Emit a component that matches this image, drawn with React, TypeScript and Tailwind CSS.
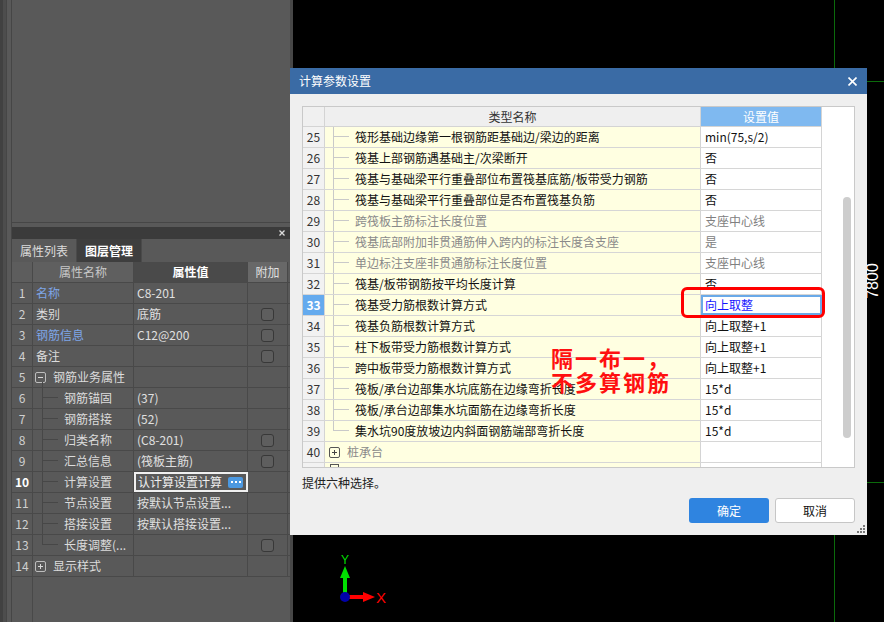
import React from 'react';

type PropRow = {
  n: number;
  name: string;
  value?: string;
  blue?: boolean;
  check?: boolean;
  tree?: 'open' | 'closed' | 'child' | 'lastChild';
  editing?: boolean;
};

const propRows: PropRow[] = [
  { n: 1, name: '名称', value: 'C8-201', blue: true },
  { n: 2, name: '类别', value: '底筋', check: true },
  { n: 3, name: '钢筋信息', value: 'C12@200', blue: true, check: true },
  { n: 4, name: '备注', check: true },
  { n: 5, name: '钢筋业务属性', tree: 'open' },
  { n: 6, name: '钢筋锚固', value: '(37)', tree: 'child' },
  { n: 7, name: '钢筋搭接', value: '(52)', tree: 'child' },
  { n: 8, name: '归类名称', value: '(C8-201)', tree: 'child', check: true },
  { n: 9, name: '汇总信息', value: '(筏板主筋)', tree: 'child', check: true },
  { n: 10, name: '计算设置', value: '认计算设置计算', tree: 'child', editing: true },
  { n: 11, name: '节点设置', value: '按默认节点设置...', tree: 'child' },
  { n: 12, name: '搭接设置', value: '按默认搭接设置...', tree: 'child' },
  { n: 13, name: '长度调整(...', tree: 'lastChild', check: true },
  { n: 14, name: '显示样式', tree: 'closed' },
];

type CalcRow = { n: number; name: string; value: string; muted?: boolean; selected?: boolean; last?: boolean };

const calcRows: CalcRow[] = [
  { n: 25, name: '筏形基础边缘第一根钢筋距基础边/梁边的距离', value: 'min(75,s/2)' },
  { n: 26, name: '筏基上部钢筋遇基础主/次梁断开', value: '否' },
  { n: 27, name: '筏基与基础梁平行重叠部位布置筏基底筋/板带受力钢筋', value: '否' },
  { n: 28, name: '筏基与基础梁平行重叠部位是否布置筏基负筋', value: '否' },
  { n: 29, name: '跨筏板主筋标注长度位置', value: '支座中心线', muted: true },
  { n: 30, name: '筏基底部附加非贯通筋伸入跨内的标注长度含支座', value: '是', muted: true },
  { n: 31, name: '单边标注支座非贯通筋标注长度位置', value: '支座中心线', muted: true },
  { n: 32, name: '筏基/板带钢筋按平均长度计算', value: '否' },
  { n: 33, name: '筏基受力筋根数计算方式', value: '向上取整', selected: true },
  { n: 34, name: '筏基负筋根数计算方式', value: '向上取整+1' },
  { n: 35, name: '柱下板带受力筋根数计算方式', value: '向上取整+1' },
  { n: 36, name: '跨中板带受力筋根数计算方式', value: '向上取整+1' },
  { n: 37, name: '筏板/承台边部集水坑底筋在边缘弯折长度', value: '15*d' },
  { n: 38, name: '筏板/承台边部集水坑面筋在边缘弯折长度', value: '15*d' },
  { n: 39, name: '集水坑90度放坡边内斜面钢筋端部弯折长度', value: '15*d', last: true },
];

function ExpandBox({ open, dark }: { open: boolean; dark?: boolean }) {
  const line = dark ? 'bg-[#d8d8d8]' : 'bg-[#444444]';
  return (
    <span
      className={`relative flex h-[11px] w-[11px] shrink-0 items-center justify-center rounded-[2px] border ${
        dark ? 'border-[#bdbdbd]' : 'border-[#555555]'
      }`}
    >
      <span className={`h-px w-[5px] ${line}`} />
      {!open && <span className={`absolute h-[5px] w-px ${line}`} />}
    </span>
  );
}

function Stub({ last, dark }: { last?: boolean; dark?: boolean }) {
  const c = dark ? 'border-[#474747]' : 'border-[#c9c9c9]';
  return (
    <div className="flex h-full w-[16px] shrink-0 flex-col">
      <div className={`h-1/2 border-b border-l ${c}`} />
      {!last && <div className={`flex-1 border-l ${c}`} />}
    </div>
  );
}

function CheckBox() {
  return <span className="h-[13px] w-[13px] rounded-[3px] border border-[#383838] bg-[#5e5e5e]" />;
}

function LeftPanel() {
  return (
    <div className="flex h-full w-[293px] shrink-0 bg-[#595959]">
      <div className="w-[3px] bg-[#414141]" />
      <div className="w-[3px] bg-[#4d4d4d]" />
      <div className="w-[5px] border-l border-[#464646]" />
      <div className="flex w-[279px] flex-col border-l border-[#464646]">
        <div className="h-[223px] border-b border-[#464646]" />
        <div className="h-[4px]" />
        <div className="flex h-[12px] items-center justify-end bg-[#3b3b3b] pr-[5px]">
          <svg width="6" height="6" viewBox="0 0 6 6">
            <path d="M0.5 0.5L5.5 5.5M5.5 0.5L0.5 5.5" stroke="#dddddd" strokeWidth="1.3" />
          </svg>
        </div>
        <div className="flex h-[23px] leading-[23px]">
          <div className="flex w-[64px] items-center justify-center text-[#dcdcdc]">属性列表</div>
          <div className="flex w-[66px] items-center justify-center border-x border-[#4a4a4a] bg-[#3e3e3e] font-bold text-white">
            图层管理
          </div>
        </div>

        <div className="flex h-[21px] border-b border-[#494949]">
          <div className="w-[21px] border-r border-[#494949] bg-[#5d5d5d]" />
          <div className="flex w-[101px] items-center justify-center border-r border-[#494949] bg-[#5f5f5f] text-[#c8c8c8]">
            属性名称
          </div>
          <div className="flex w-[114px] items-center justify-center border-r border-[#494949] bg-[#4a4a4a] font-bold text-white">
            属性值
          </div>
          <div className="flex w-[40px] items-center justify-center border-r border-[#494949] bg-[#686868] text-[#e0e0e0]">
            附加
          </div>
        </div>

        {propRows.map((r) => (
          <div key={r.n} className="flex h-[21px] border-b border-[#494949] leading-[20px]">
            <div
              className={`flex w-[21px] items-center justify-center border-r border-[#494949] ${
                r.editing ? 'font-bold text-white' : 'text-[#d0d0d0]'
              }`}
            >
              {r.n}
            </div>
            <div className="relative flex w-[101px] items-center overflow-hidden whitespace-nowrap border-r border-[#494949]">
              {(r.tree === 'open' || r.tree === 'closed') && (
                <div className="flex items-center gap-[7px] pl-[2px] text-[#dcdcdc]">
                  <ExpandBox open={r.tree === 'open'} dark />
                  {r.name}
                </div>
              )}
              {r.tree === 'open' && <div className="absolute bottom-0 left-[9px] top-[15px] border-l border-[#474747]" />}
              {(r.tree === 'child' || r.tree === 'lastChild') && (
                <div className="flex h-full items-center pl-[9px] text-[#dcdcdc]">
                  <Stub dark last={r.tree === 'lastChild'} />
                  <span className="pl-[6px]">{r.name}</span>
                </div>
              )}
              {!r.tree && <span className={`pl-[3px] ${r.blue ? 'text-[#7ea6e8]' : 'text-[#dcdcdc]'}`}>{r.name}</span>}
            </div>
            {r.editing ? (
              <div className="flex w-[114px] items-center justify-between border-2 border-[#f0f0f0] pl-[2px] pr-[3px] text-[#eeeeee]">
                <span>{r.value}</span>
                <span className="flex h-[11px] w-[15px] items-center justify-center gap-[2px] rounded-[2px] bg-[#4b98e0]">
                  <span className="h-[2px] w-[2px] bg-white" />
                  <span className="h-[2px] w-[2px] bg-white" />
                  <span className="h-[2px] w-[2px] bg-white" />
                </span>
              </div>
            ) : (
              <div className="flex w-[114px] items-center overflow-hidden whitespace-nowrap border-r border-[#494949] pl-[3px] text-[#e0e0e0]">
                {r.value}
              </div>
            )}
            <div className="flex w-[40px] items-center justify-center border-r border-[#494949]">{r.check && <CheckBox />}</div>
          </div>
        ))}
        <div className="flex flex-1">
          <div className="w-[21px] border-r border-[#494949]" />
        </div>
      </div>
      <div className="w-[3px] bg-[#474747]" />
    </div>
  );
}

function Canvas() {
  return (
    <div className="relative h-full flex-1 bg-black">
      <svg className="absolute inset-0" width="591" height="622">
        <line x1="541.5" y1="0" x2="541.5" y2="622" stroke="#0b6a0b" />
        <line x1="0" y1="81.5" x2="591" y2="81.5" stroke="#0b6a0b" />
        <line x1="0" y1="482.5" x2="591" y2="482.5" stroke="#0b6a0b" />
        <text x="52" y="564" fontSize="12" fill="#00dd00" textAnchor="middle" fontFamily="Liberation Sans, sans-serif">
          Y
        </text>
        <rect x="50" y="576" width="4" height="18" fill="#00e000" />
        <polygon points="52,566 47,578 57,578" fill="#00e000" />
        <rect x="56" y="595" width="15" height="4" fill="#ff0000" />
        <polygon points="82,597 70,592 70,602" fill="#ff0000" />
        <circle cx="52" cy="597" r="5" fill="#0000aa" />
        <text x="83" y="603" fontSize="15" fill="#ff0000" fontFamily="Liberation Sans, sans-serif">
          X
        </text>
      </svg>
      <div className="absolute left-[562px] top-[272px] w-[36px] -rotate-90 text-center font-['Liberation_Sans',sans-serif] text-[16px] leading-[18px] text-white">
        7800
      </div>
    </div>
  );
}

function CalcDialog() {
  return (
    <div className="absolute left-[290px] top-[68px] flex h-[467px] w-[577px] flex-col bg-[#efefef]">
      <div className="flex h-[26px] items-center justify-between bg-[#3a6ba5] pl-[9px] pr-[10px] text-white">
        <span>计算参数设置</span>
        <svg width="9" height="9" viewBox="0 0 9 9">
          <path d="M0.5 0.5L8.5 8.5M8.5 0.5L0.5 8.5" stroke="#ffffff" strokeWidth="1.6" />
        </svg>
      </div>

      <div className="mx-[12px] mt-[12px] flex h-[362px] border border-[#c9c9c9] bg-white">
        <div className="flex w-[519px] flex-col overflow-hidden">
          <div className="flex h-[20px] shrink-0 border-b border-[#d4d4d4] leading-[19px]">
            <div className="w-[22px] border-r border-[#d4d4d4] bg-[#f0f0f0]" />
            <div className="w-[376px] border-r border-[#d4d4d4] bg-[#efefef] text-center text-[#333333]">类型名称</div>
            <div className="w-[121px] border-r border-[#d4d4d4] bg-[#7fb9f0] text-center text-white">设置值</div>
          </div>

          {calcRows.map((r) => (
            <div key={r.n} className="flex h-[21px] shrink-0 border-b border-[#d6d6d6] leading-[20px]">
              <div
                className={`w-[22px] border-r border-[#d4d4d4] text-center ${
                  r.selected ? 'bg-[#64aaee] font-bold text-white' : 'bg-[#f2f2f2] text-[#333333]'
                }`}
              >
                {r.n}
              </div>
              <div className="flex w-[376px] overflow-hidden whitespace-nowrap border-r border-[#d4d4d4] bg-[#ffffe1] pl-[8px]">
                <Stub last={r.last} />
                <span className={`pl-[6px] ${r.muted ? 'text-[#8a8a8a]' : 'text-[#111111]'}`}>{r.name}</span>
              </div>
              {r.selected ? (
                <div className="w-[121px] border-2 border-[#6aa9e8] pl-[2px] leading-[16px] text-[#1515ff]">{r.value}</div>
              ) : (
                <div className={`w-[121px] border-r border-[#d4d4d4] pl-[4px] ${r.muted ? 'text-[#808080]' : 'text-[#111111]'}`}>
                  {r.value}
                </div>
              )}
            </div>
          ))}

          <div className="flex h-[21px] shrink-0 border-b border-[#d6d6d6] leading-[20px]">
            <div className="w-[22px] border-r border-[#d4d4d4] bg-[#f2f2f2] text-center text-[#333333]">40</div>
            <div className="flex w-[376px] items-center gap-[7px] border-r border-[#d4d4d4] bg-[#ffffe1] pl-[4px] text-[#8a8a8a]">
              <ExpandBox open={false} />
              桩承台
            </div>
            <div className="w-[121px] border-r border-[#d4d4d4]" />
          </div>
          <div className="flex flex-1">
            <div className="w-[22px] border-r border-[#d4d4d4] bg-[#f2f2f2]" />
            <div className="w-[376px] border-r border-[#d4d4d4] bg-[#ffffe1] pl-[5px]">
              <div className="mt-[1px] h-[3px] w-[9px] border-x border-t border-[#555555]" />
            </div>
            <div className="w-[121px] border-r border-[#d4d4d4]" />
          </div>
        </div>
        <div className="flex-1 pl-[21px] pt-[90px]">
          <div className="h-[241px] w-[8px] rounded-full bg-[#cdcdcd]" />
        </div>
      </div>

      <div className="ml-[12px] mt-[7px] leading-[16px] text-[#222222]">提供六种选择。</div>

      <div className="mr-[12px] mt-[7px] flex justify-end gap-[6px]">
        <button className="h-[25px] w-[80px] rounded-[3px] bg-[#2f84e0] text-white">确定</button>
        <button className="h-[25px] w-[80px] rounded-[3px] border border-[#c6c6c6] bg-white text-[#111111]">取消</button>
      </div>

      <svg className="absolute bottom-[2px] right-[2px]" width="8" height="8" viewBox="0 0 8 8">
        <rect x="6" y="0" width="2" height="2" fill="#777777" />
        <rect x="3" y="3" width="2" height="2" fill="#777777" />
        <rect x="6" y="3" width="2" height="2" fill="#777777" />
        <rect x="0" y="6" width="2" height="2" fill="#777777" />
        <rect x="3" y="6" width="2" height="2" fill="#777777" />
        <rect x="6" y="6" width="2" height="2" fill="#777777" />
      </svg>
    </div>
  );
}

export default function App() {
  return (
    <div className="relative flex h-[622px] w-[884px] overflow-hidden bg-black font-['Noto_Sans_CJK_SC',sans-serif] text-[12px]">
      <LeftPanel />
      <Canvas />
      <CalcDialog />
      {/* 标注 */}
      <div className="absolute left-[681px] top-[287px] h-[31px] w-[144px] rounded-[6px] border-[3px] border-[#ff0000]" />
      <div className="absolute left-[551px] top-[345px] text-[22px] font-bold leading-[24px] tracking-[2px] text-[#ff1010]">
        <div>隔一布一，</div>
        <div>不多算钢筋</div>
      </div>
    </div>
  );
}
